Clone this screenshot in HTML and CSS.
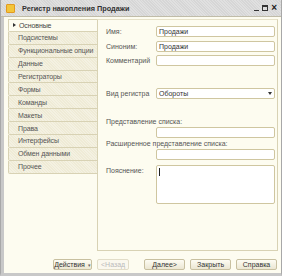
FILE: index.html
```html
<!DOCTYPE html>
<html>
<head>
<meta charset="utf-8">
<link rel="stylesheet" href="styles.css">
</head>
<body>
<div class="window">
  <div class="titlebar">
    <span class="ticon"></span>
    <span class="title">Регистр накопления Продажи</span>
    <span class="wbtns">
      <span class="wmin"></span>
      <span class="wmax"></span>
      <span class="wclose">×</span>
    </span>
  </div>
  <div class="main">
    <div class="tabs">
      <div class="tab active"><span class="arrow"></span>Основные</div>
      <div class="tab">Подсистемы</div>
      <div class="tab">Функциональные опции</div>
      <div class="tab">Данные</div>
      <div class="tab">Регистраторы</div>
      <div class="tab">Формы</div>
      <div class="tab">Команды</div>
      <div class="tab">Макеты</div>
      <div class="tab">Права</div>
      <div class="tab">Интерфейсы</div>
      <div class="tab">Обмен данными</div>
      <div class="tab">Прочее</div>
    </div>
    <div class="panel">
      <div class="row r1"><span class="lbl">Имя:</span><span class="inp">Продажи</span></div>
      <div class="row r2"><span class="lbl">Синоним:</span><span class="inp">Продажи</span></div>
      <div class="row r3"><span class="lbl">Комментарий</span><span class="inp"></span></div>
      <div class="row r4"><span class="lbl">Вид регистра</span><span class="inp sel">Обороты<span class="dd"></span></span></div>
      <div class="blk b1"><div class="lbl">Представление списка:</div><div class="inp"></div></div>
      <div class="blk b2"><div class="lbl">Расширенное представление списка:</div><div class="inp"></div></div>
      <div class="row r5"><span class="lbl">Пояснение:</span><span class="inp area"><span class="caret"></span></span></div>
    </div>
  </div>
  <div class="footer">
    <span class="btn act">Действия <span class="small">▾</span></span>
    <span class="btn dis">&lt;Назад</span>
    <span class="btn nx">Далее&gt;</span>
    <span class="btn">Закрыть</span>
    <span class="btn">Справка</span>
  </div>
</div>
</body>
</html>
```
FILE: styles.css
```css
html, body { margin: 0; padding: 0; }
body { width: 282px; height: 276px; overflow: hidden; background: #fff; font-family: "Liberation Sans", Arial, sans-serif; font-size: 7px; color: #444; }
.window { box-sizing: border-box; width: 282px; height: 276px; background: #fdfcf0; border: 1px solid #a8a8a8; border-top: none; border-bottom: 3px solid #c8c8c8; display: flex; flex-direction: column; }
.titlebar { height: 16px; flex: none; background: #d6d6d6; background-image: repeating-linear-gradient(45deg, rgba(255,255,255,0.25) 0 1px, transparent 1px 2px); display: flex; align-items: center; padding: 0 4px 0 5px; border-bottom: 1px solid #c0bca8; }
.ticon { width: 7px; height: 7px; background: #f3c53a; border: 1px solid #e39a20; border-radius: 1px; margin-right: 7px; }
.title { font-weight: bold; font-size: 7.3px; color: #333; flex: 1; }
.wbtns { display: flex; align-items: center; gap: 3px; }
.wmin { width: 5px; height: 1px; background: #333; margin-top: 5px; }
.wmax { width: 6px; height: 6px; border: 1px solid #333; box-sizing: border-box; border-top-width: 2px; }
.wclose { font-size: 10px; font-weight: bold; line-height: 8px; color: #222; }
.main { flex: 1; display: flex; padding: 2px 3px 0 4px; border-left: 3px solid #c8c8c8; }
.tabs { width: 90px; flex: none; display: flex; flex-direction: column; }
.tab { box-sizing: border-box; height: 12.9px; display: flex; align-items: center; padding-left: 9px; white-space: nowrap; letter-spacing: -0.1px; background: #efebd6; background-image: repeating-linear-gradient(45deg, rgba(255,255,255,0.3) 0 1px, transparent 1px 2px); border: 1px solid #d8d2b4; border-top: none; border-radius: 0 0 0 2px; color: #555; }
.tab:first-child { border-top: 1px solid #d8d2b4; }
.tab.active { background: #fdfcf0; background-image: none; border-right-color: #fdfcf0; padding-left: 4px; color: #444; }
.arrow { width: 0; height: 0; border-left: 3px solid #333; border-top: 2.5px solid transparent; border-bottom: 2.5px solid transparent; margin-right: 3px; }
.panel { flex: 1; border: 1px solid #d8d2b4; border-top: 1px solid #e6e1c8; margin-bottom: 4px; margin-left: -1px; display: flex; flex-direction: column; padding: 6px 2px 0 8px; }
.row { display: flex; align-items: center; }
.lbl { width: 50px; flex: none; color: #555; white-space: nowrap; }
.inp { box-sizing: border-box; flex: 1; height: 11px; border: 1px solid #cfc6a0; border-radius: 2px; background: #fff; padding-left: 2px; display: flex; align-items: center; color: #333; }
.r2 { margin-top: 3.5px; }
.r3 { margin-top: 3.5px; }
.r4 { margin-top: 22px; }
.sel { position: relative; }
.dd { position: absolute; right: 1px; top: 1px; width: 7px; height: 7px; display: flex; align-items: center; justify-content: center; }
.dd::after { content: ""; border-top: 3px solid #333; border-left: 2.5px solid transparent; border-right: 2.5px solid transparent; }
.blk { display: flex; flex-direction: column; }
.blk .lbl { width: auto; height: 9px; }
.blk .inp { flex: none; margin-left: 50px; }
.b1 { margin-top: 19px; }
.b2 { margin-top: 2px; }
.r5 { margin-top: 5px; align-items: flex-start; }
.r5 .lbl { margin-top: 2px; }
.area { height: 39px; align-items: flex-start; padding: 2px 0 0 2px; }
.caret { width: 1px; height: 8px; background: #222; }
.footer { height: 17px; flex: none; display: flex; align-items: center; padding: 1px 4px 0 49px; gap: 5px; border-left: 3px solid #c8c8c8; }
.btn { box-sizing: border-box; height: 11px; display: flex; align-items: center; justify-content: center; border: 1px solid #c8c0a0; border-radius: 2px; background: linear-gradient(#fdfcf3, #ebe6d2); color: #333; width: 42px; }
.btn.act { width: 40px; }
.small { font-size: 5px; margin-left: 3px; color: #666; }
.btn.dis { color: #bbb; border-color: #e2ddc8; background: #faf8ee; width: 33px; margin-right: 10px; }
```
